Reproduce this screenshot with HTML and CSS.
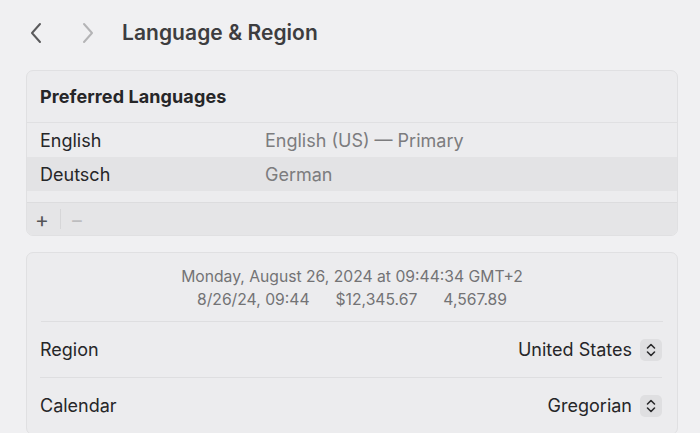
FILE: index.html
```html
<!DOCTYPE html>
<html>
<head>
<meta charset="utf-8">
<link rel="stylesheet" href="styles.css">
</head>
<body>
<div class="toolbar">
  <svg class="nav back" width="14" height="22" viewBox="0 0 14 22"><path d="M11 2 L3 11 L11 20" fill="none" stroke="#5a5a5c" stroke-width="2" stroke-linecap="round" stroke-linejoin="round"/></svg>
  <svg class="nav fwd" width="14" height="22" viewBox="0 0 14 22"><path d="M3 2 L11 11 L3 20" fill="none" stroke="#b4b4b6" stroke-width="2" stroke-linecap="round" stroke-linejoin="round"/></svg>
  <div class="title">Language &amp; Region</div>
</div>
<div class="content">
  <div class="card">
    <div class="card-head">Preferred Languages</div>
    <div class="lang-list">
      <div class="lang-row"><span class="lang-name">English</span><span class="lang-desc">English (US) — Primary</span></div>
      <div class="lang-row selected"><span class="lang-name">Deutsch</span><span class="lang-desc">German</span></div>
    </div>
    <div class="list-footer">
      <span class="fbtn">+</span>
      <span class="fdiv"></span>
      <span class="fbtn dim">−</span>
    </div>
  </div>
  <div class="card card2">
    <div class="preview">
      <div>Monday, August 26, 2024 at 09:44:34 GMT+2</div>
      <div class="preview-2"><span>8/26/24, 09:44</span><span>$12,345.67</span><span>4,567.89</span></div>
    </div>
    <div class="setting">
      <span class="setting-label">Region</span>
      <span class="setting-value">United States</span>
      <span class="stepper"><svg width="10" height="14" viewBox="0 0 10 14"><path d="M1.5 5 L5 1.5 L8.5 5 M1.5 9 L5 12.5 L8.5 9" fill="none" stroke="#2a2a2c" stroke-width="1.6" stroke-linecap="round" stroke-linejoin="round"/></svg></span>
    </div>
    <div class="setting">
      <span class="setting-label">Calendar</span>
      <span class="setting-value">Gregorian</span>
      <span class="stepper"><svg width="10" height="14" viewBox="0 0 10 14"><path d="M1.5 5 L5 1.5 L8.5 5 M1.5 9 L5 12.5 L8.5 9" fill="none" stroke="#2a2a2c" stroke-width="1.6" stroke-linecap="round" stroke-linejoin="round"/></svg></span>
    </div>
  </div>
</div>
</body>
</html>
```
FILE: styles.css
```css
html, body {
  margin: 0;
  padding: 0;
  background: #f0f0f2;
  font-family: Inter, "Liberation Sans", sans-serif;
  color: #2a2a2c;
  overflow: hidden;
}
.toolbar {
  height: 70px;
  display: flex;
  align-items: center;
  padding-left: 29px;
  box-sizing: border-box;
  padding-bottom: 5px;
}
.nav { display: block; }
.fwd { margin-left: 38px; }
.title {
  margin-left: 27px;
  font-size: 21px;
  font-weight: 600;
  color: #3d3d3f;
  letter-spacing: 0.05px;
}
.content {
  padding: 0 22px 0 26px;
  display: flex;
  flex-direction: column;
  gap: 16px;
}
.card {
  background: #ececee;
  border: 1px solid #e0e0e2;
  border-radius: 7px;
  overflow: hidden;
}
.card-head {
  height: 51px;
  display: flex;
  align-items: center;
  padding-left: 13px;
  font-size: 18px;
  font-weight: 650;
  border-bottom: 1px solid #e0e0e2;
  color: #262628;
  letter-spacing: 0.1px;
}
.lang-list {
  padding-bottom: 11px;
  border-bottom: 1px solid #dcdcde;
}
.lang-row {
  height: 34px;
  display: flex;
  align-items: center;
  padding-left: 13px;
  font-size: 18px;
}
.lang-row.selected { background: #e3e3e5; }
.lang-name { width: 225px; color: #262628; }
.lang-desc { color: #7c7c7e; }
.list-footer {
  height: 32px;
  background: #e5e5e7;
  display: flex;
  align-items: center;
  padding-left: 7px;
}
.fbtn {
  width: 16px;
  text-align: center;
  font-size: 21px;
  color: #555557;
  line-height: 1;
  margin-top: 1px;
}
.fbtn.dim { color: #bdbdbf; }
.fdiv {
  width: 1px;
  height: 20px;
  background: #d6d6d8;
  margin: 0 8px 0 10px;
}
.preview {
  height: 69px;
  display: flex;
  flex-direction: column;
  justify-content: center;
  align-items: center;
  font-size: 15.7px;
  color: #737375;
  line-height: 23px;
  margin: 0 14px;
  border-bottom: 1px solid #dedee0;
  padding-top: 1px;
  box-sizing: border-box;
}
.preview-2 {
  display: flex;
  gap: 26px;
}
.setting {
  height: 55px;
  margin: 0 15px 0 13px;
  display: flex;
  align-items: center;
  border-bottom: 1px solid #dedee0;
  font-size: 18px;
}
.setting-label { flex: 1; color: #262628; }
.setting-value { color: #262628; }
.stepper {
  width: 22px;
  height: 22px;
  border-radius: 5px;
  background: #dfdfe1;
  margin-left: 8px;
  display: flex;
  align-items: center;
  justify-content: center;
}
.stepper svg { display: block; }
```
